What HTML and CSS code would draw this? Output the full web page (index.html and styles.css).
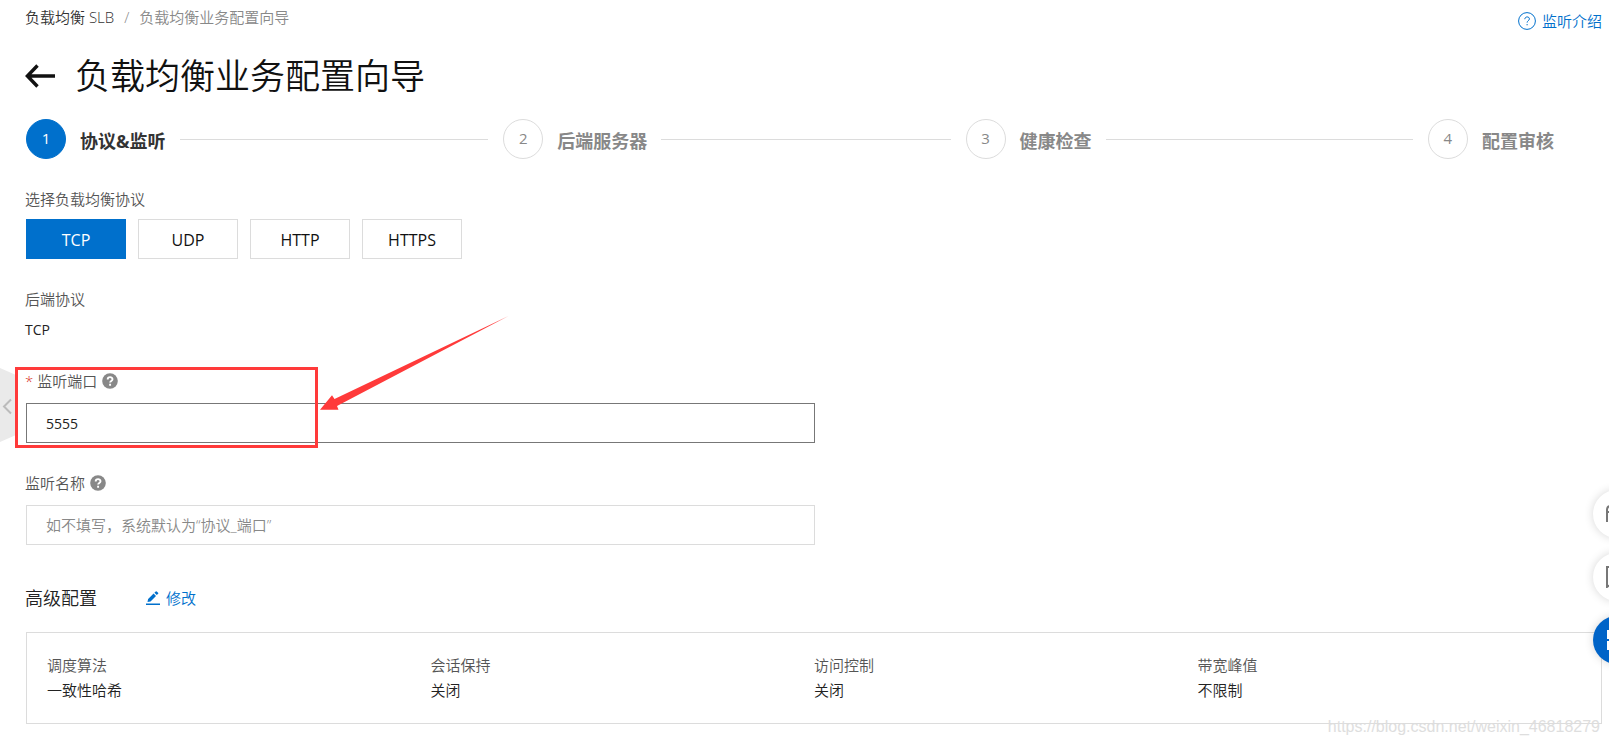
FILE: index.html
```html
<!DOCTYPE html>
<html lang="zh-CN">
<head>
<meta charset="utf-8">
<title>负载均衡业务配置向导</title>
<link rel="stylesheet" href="styles.css">
</head>
<body>
<main class="page">
  <header class="topbar">
    <nav class="breadcrumb" aria-label="breadcrumb">
      <a class="crumb" href="#">负载均衡 SLB</a>
      <span>/</span>
      <span>负载均衡业务配置向导</span>
    </nav>
    <a class="link help-link" href="#">
      <svg width="18" height="18" viewBox="0 0 18 18" fill="none" stroke="currentColor"><circle cx="9" cy="9" r="8.4"/><path d="M6.8 7.2c0-3 4.6-3 4.6-.3 0 1.7-2.3 1.9-2.3 3.7M9.1 12v1.3"/></svg>
      监听介绍
    </a>
  </header>

  <div class="title-row">
    <button class="back" type="button" aria-label="返回">
      <svg width="30" height="24" viewBox="0 0 30 24" fill="none" stroke="currentColor" stroke-width="3.4"><path d="M2 12h28M12.5 1.5 2.4 12l10.1 10.5"/></svg>
    </button>
    <h1 class="title">负载均衡业务配置向导</h1>
  </div>

  <ol class="steps">
    <li class="step active"><span class="num">1</span><span class="step-label">协议&amp;监听</span></li>
    <li class="step"><span class="num">2</span><span class="step-label">后端服务器</span></li>
    <li class="step"><span class="num">3</span><span class="step-label">健康检查</span></li>
    <li class="step"><span class="num">4</span><span class="step-label">配置审核</span></li>
  </ol>

  <form class="form">
    <div class="field" role="group" aria-labelledby="protocol-label">
      <span class="label" id="protocol-label">选择负载均衡协议</span>
      <div class="protocols">
        <button class="protocol selected" type="button">TCP</button>
        <button class="protocol" type="button">UDP</button>
        <button class="protocol" type="button">HTTP</button>
        <button class="protocol" type="button">HTTPS</button>
      </div>
    </div>

    <div class="field">
      <span class="label">后端协议</span>
      <span class="value">TCP</span>
    </div>

    <div class="field field-input">
      <label class="label" for="port"><span class="required">*</span>监听端口
        <svg class="hint" width="16" height="16" viewBox="0 0 16 16"><circle cx="8" cy="8" r="7.8" fill="#888"/><path d="M5.7 6.5c0-3.1 4.8-3 4.8-.3 0 1.7-2.4 1.8-2.4 3.4M8.1 10.7v2" fill="none" stroke="#fff" stroke-width="1.9"/></svg>
      </label>
      <input class="input filled" id="port" type="text" value="5555">
      <span class="mark-box"></span>
      <svg class="mark-arrow" width="190" height="96" viewBox="0 0 190 96"><path d="M0 94.7 12 80.3l2.5 3.7L188.500 1 17 91l1.5 3.7z" fill="#ff3a3a"/></svg>
    </div>

    <div class="field field-input">
      <label class="label" for="name">监听名称
        <svg class="hint" width="16" height="16" viewBox="0 0 16 16"><circle cx="8" cy="8" r="7.8" fill="#888"/><path d="M5.7 6.5c0-3.1 4.8-3 4.8-.3 0 1.7-2.4 1.8-2.4 3.4M8.1 10.7v2" fill="none" stroke="#fff" stroke-width="1.9"/></svg>
      </label>
      <input class="input" id="name" type="text" placeholder="如不填写，系统默认为“协议_端口”">
    </div>
  </form>

  <section class="advanced">
    <div class="advanced-head">
      <h2 class="advanced-title">高级配置</h2>
      <a class="link edit-link" href="#">
        <svg width="14" height="14" viewBox="0 0 14 14" fill="currentColor"><path d="M0 12.4h14V14H0zM1.5 11l.6-3L7.6 2.500l2.400 2.400L4.500 10.400zM8.400 1.700 9.700.4q.5-.5 1 0l1.400 1.400q.5.5 0 1l-1.300 1.300z"/></svg>
        修改
      </a>
    </div>
    <dl class="panel">
      <div class="item"><dt>调度算法</dt><dd>一致性哈希</dd></div>
      <div class="item"><dt>会话保持</dt><dd>关闭</dd></div>
      <div class="item"><dt>访问控制</dt><dd>关闭</dd></div>
      <div class="item"><dt>带宽峰值</dt><dd>不限制</dd></div>
    </dl>
  </section>

  <button class="collapse" type="button" aria-label="展开">
    <svg width="16" height="74" viewBox="0 0 16 74"><path d="M0 0 16 7v60L0 74z" fill="#eaeaea"/><path d="M11 31.500 4 38.500l7 7" fill="none" stroke="#bbb" stroke-width="2"/></svg>
  </button>

  <div class="floats">
    <button class="float" type="button" aria-label="客服">
      <svg width="22" height="22" viewBox="0 0 22 22" fill="none" stroke="#777" stroke-width="2"><path d="M1 19V7q0-4 4-4h12q4 0 4 4v12M1 9h4v10"/></svg>
    </button>
    <button class="float" type="button" aria-label="反馈">
      <svg width="22" height="22" viewBox="0 0 22 22" fill="none" stroke="#777" stroke-width="2"><path d="M1 1h20v16H7l-6 4z"/></svg>
    </button>
    <button class="float primary" type="button" aria-label="应用">
      <svg width="20" height="20" viewBox="0 0 20 20" fill="#fff"><path d="M0 0h9v9H0zM11 0h9v9h-9zM0 11h9v9H0zM11 11h9v9h-9z"/></svg>
    </button>
  </div>

  <span class="watermark">https://blog.csdn.net/weixin_46818279</span>
</main>
</body>
</html>
```

FILE: styles.css
```css
* {
  box-sizing: border-box;
}

body {
  margin: 0;
  background: #fff;
  color: #222;
  font: 350 15px/24px "Open Sans", "Noto Sans CJK SC", sans-serif;
}

button,
input {
  font: inherit;
  color: inherit;
}

button {
  padding: 0;
  border: 0;
  background: none;
  cursor: pointer;
}

.page {
  position: relative;
  min-height: 100vh;
  padding: 5px 7px 21px 25px;
  overflow: hidden;
}

.topbar {
  display: flex;
  justify-content: space-between;
  height: 47px;
}

.breadcrumb {
  display: flex;
  gap: 10px;
  color: #888;
}

.crumb {
  color: #333;
  text-decoration: none;
}

.link {
  display: flex;
  align-items: center;
  color: #0070cc;
  text-decoration: none;
}

.help-link {
  gap: 6px;
  height: 32px;
}

.title-row {
  display: flex;
  align-items: center;
  gap: 20px;
  height: 48px;
  color: #111;
}

.back {
  display: flex;
}

.title {
  margin: 0;
  font-size: 35px;
  font-weight: 350;
  line-height: 48px;
}

.steps {
  display: grid;
  grid-template-columns: 1fr 1fr 1fr 12%;
  margin: 19px 0 28px;
  padding: 0 0 0 1px;
  list-style: none;
}

.step {
  display: flex;
  align-items: center;
  color: #888;
}

.step + .step {
  padding-left: 15px;
}

.step:not(:last-child)::after {
  flex: 1;
  height: 1px;
  margin-left: 14px;
  background: #dcdcdc;
  content: "";
}

.num {
  width: 40px;
  height: 40px;
  border: 1px solid #dcdcdc;
  border-radius: 50%;
  font-weight: 400;
  line-height: 37px;
  text-align: center;
}

.step-label {
  padding: 4px 0 0 14px;
  font-size: 18px;
  font-weight: 700;
}

.active {
  color: #333;
}

.active .num {
  border-color: #0070cc;
  background: #0070cc;
  color: #fff;
}

.form {
  display: flex;
  flex-direction: column;
  gap: 28px;
}

.field {
  display: flex;
  flex-direction: column;
  gap: 8px;
  position: relative;
}

.field-input {
  gap: 10px;
}

.label {
  display: flex;
  align-items: center;
  color: #555;
}

.required {
  margin-right: 4px;
  color: #d93026;
}

.hint {
  margin-left: 5px;
}

.value {
  font-size: 14px;
  font-weight: 400;
  line-height: 22px;
}

.protocols {
  display: flex;
  gap: 12px;
  padding-left: 1px;
}

.protocol {
  width: 100px;
  height: 40px;
  padding-top: 2px;
  border: 1px solid #dcdcdc;
  color: #111;
  font-size: 16px;
  font-weight: 400;
}

.selected {
  border-color: #0070cc;
  background: #0070cc;
  color: #fff;
}

.input {
  width: 50%;
  height: 40px;
  margin-left: 1px;
  padding: 0 19px;
  border: 1px solid #dcdcdc;
  border-radius: 0;
  background: #fff;
}

.input::placeholder {
  color: #888;
}

.filled {
  border-color: #777;
  font-size: 14px;
  font-weight: 400;
}

.mark-box {
  position: absolute;
  top: -2px;
  left: -10px;
  z-index: 1;
  width: 303px;
  height: 81px;
  border: 3px solid #ff3a3a;
  pointer-events: none;
}

.mark-arrow {
  position: absolute;
  top: -54px;
  left: 295px;
}

.advanced-head {
  display: flex;
  align-items: center;
  gap: 49px;
  margin: 40px 0 22px;
}

.advanced-title {
  margin: 0;
  font-size: 18px;
  font-weight: 350;
  line-height: 24px;
}

.edit-link {
  gap: 6px;
  padding-top: 1px;
}

.panel {
  display: grid;
  grid-template-columns: repeat(4, 1fr);
  margin: 0 0 0 1px;
  padding: 20px;
  border: 1px solid #dcdcdc;
  line-height: 25px;
}

.panel dt {
  color: #555;
}

.panel dd {
  margin: 0;
}

.collapse {
  display: flex;
  position: absolute;
  top: 368px;
  left: 0;
}

.floats {
  display: flex;
  flex-direction: column;
  gap: 15px;
  position: absolute;
  top: 490px;
  right: -32px;
}

.float {
  display: flex;
  align-items: center;
  justify-content: center;
  width: 48px;
  height: 48px;
  border-radius: 50%;
  background: #fff;
  box-shadow: 0 0 10px rgba(0, 0, 0, 0.16);
}

.primary {
  background: #0064c8;
}

.watermark {
  position: absolute;
  right: 9px;
  bottom: 6px;
  color: #dedede;
  font: 400 16px/24px "Liberation Sans", sans-serif;
}
```
